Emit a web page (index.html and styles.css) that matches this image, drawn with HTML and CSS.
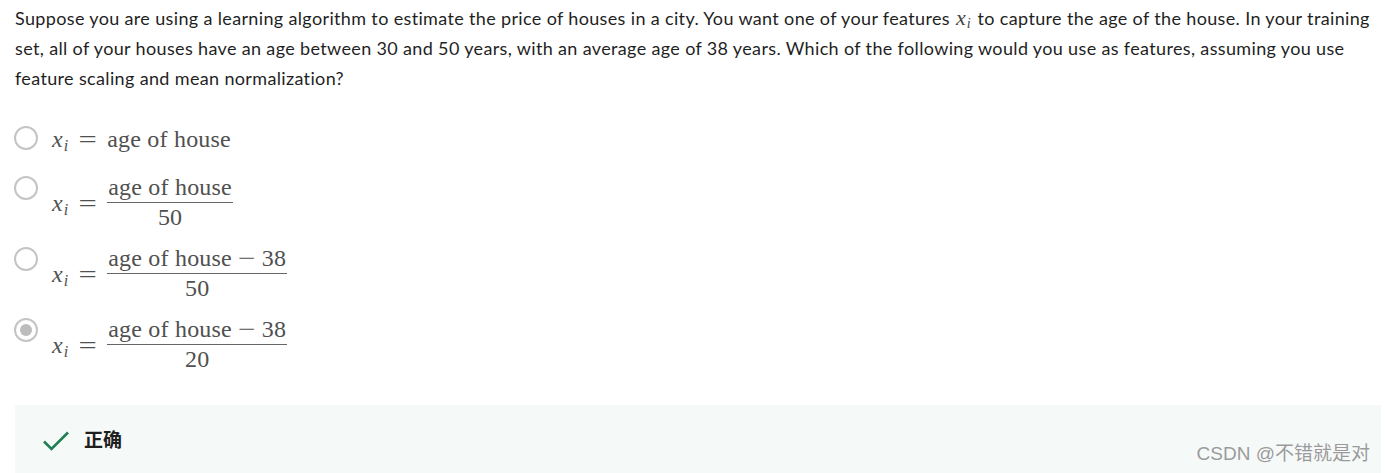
FILE: index.html
```html
<!DOCTYPE html>
<html>
<head>
<meta charset="utf-8">
<link rel="stylesheet" href="styles.css">
</head>
<body>
<div class="page">
  <p class="question">Suppose you are using a learning algorithm to estimate the price of houses in a city. You want one of your features <span class="m"><i>x</i><sub>i</sub></span> to capture the age of the house. In your training<br>set, all of your houses have an age between 30 and 50 years, with an average age of 38 years. Which of the following would you use as features, assuming you use<br>feature scaling and mean normalization?</p>

  <div class="options">
    <div class="option opt-simple">
      <span class="radio"></span>
      <span class="math"><span class="var"><i>x</i><sub>i</sub></span><span class="eq">=</span>age of house</span>
    </div>
    <div class="option">
      <span class="radio"></span>
      <span class="math"><span class="var"><i>x</i><sub>i</sub></span><span class="eq">=</span><span class="frac"><span class="num">age of house</span><span class="den">50</span></span></span>
    </div>
    <div class="option">
      <span class="radio"></span>
      <span class="math"><span class="var"><i>x</i><sub>i</sub></span><span class="eq">=</span><span class="frac"><span class="num">age of house<span class="minus">−</span>38</span><span class="den">50</span></span></span>
    </div>
    <div class="option">
      <span class="radio checked"></span>
      <span class="math"><span class="var"><i>x</i><sub>i</sub></span><span class="eq">=</span><span class="frac"><span class="num">age of house<span class="minus">−</span>38</span><span class="den">20</span></span></span>
    </div>
  </div>

  <div class="feedback">
    <svg class="check" width="28" height="22" viewBox="0 0 28 22"><path d="M2 11.5 L9.5 19 L26 2.5" fill="none" stroke="#1f7f52" stroke-width="2.6"/></svg>
    <span class="fb-text">正确</span>
  </div>
</div>
<div class="watermark">CSDN @不错就是对</div>
</body>
</html>
```
FILE: styles.css
```css
html, body {
  margin: 0;
  padding: 0;
  background: #ffffff;
}
.page {
  padding: 3px 4px 0 15px;
}
.question {
  margin: 0;
  font-family: Lato, "Noto Sans", sans-serif;
  font-size: 18px;
  letter-spacing: 0.35px;
  line-height: 30px;
  color: #1f1f1f;
  white-space: nowrap;
}
.m {
  font-family: "Liberation Serif", serif;
  font-size: 22px;
  color: #444;
  letter-spacing: 0;
  margin: 0 2px 0 1px;
}
.m sub {
  font-size: 14px;
  font-style: italic;
  vertical-align: -3px;
  line-height: 0;
  margin-left: 1px;
}
.options {
  margin-top: 33px;
  display: flex;
  flex-direction: column;
  gap: 18px;
}
.option {
  display: flex;
  align-items: flex-start;
}
.opt-simple {
  min-height: 32px;
}
.radio {
  width: 20px;
  height: 20px;
  border: 2px solid #c4c4c4;
  border-radius: 50%;
  box-sizing: content-box;
  margin-left: -1px;
  margin-right: 14px;
  flex: none;
  position: relative;
}
.radio.checked::after {
  content: "";
  position: absolute;
  left: 4px;
  top: 4px;
  width: 12px;
  height: 12px;
  border-radius: 50%;
  background: #bdbdbd;
}
.math {
  font-family: "Liberation Serif", "DejaVu Serif", serif;
  font-size: 24px;
  letter-spacing: 0.2px;
  color: #505050;
  line-height: 26px;
  display: inline-flex;
  align-items: center;
}
.var {
  display: inline-block;
  white-space: nowrap;
}
.var i {
  font-size: 24px;
}
.var sub {
  font-size: 16px;
  font-style: italic;
  vertical-align: -4px;
  line-height: 0;
  margin-left: 1px;
}
.eq {
  display: inline-block;
  transform: scaleX(1.35);
  margin: 0 13px 0 12px;
}
.frac {
  display: inline-flex;
  flex-direction: column;
  align-items: center;
  margin-top: -2px;
}
.num {
  padding: 0 1px 2px;
  border-bottom: 1px solid #666;
  line-height: 26px;
}
.den {
  padding-top: 2px;
  line-height: 24px;
}
.minus {
  display: inline-block;
  transform: scaleX(1.3);
  margin: 0 8px;
}
.feedback {
  margin-top: 34px;
  background: #f5f9f8;
  height: 80px;
  display: flex;
  align-items: flex-start;
  padding: 21px 0 0 27px;
  box-sizing: border-box;
  gap: 14px;
}
.check {
  margin-top: 4px;
  flex: none;
}
.fb-text {
  font-family: "Noto Sans CJK SC", sans-serif;
  font-weight: 700;
  font-size: 19px;
  line-height: 26px;
  color: #1f1f1f;
}
.watermark {
  position: absolute;
  right: 15px;
  top: 438px;
  font-family: "Liberation Sans", "Noto Sans CJK SC", sans-serif;
  font-size: 19px;
  color: #9a9a9a;
  text-shadow: 0 0 1px #ffffff;
}
```
